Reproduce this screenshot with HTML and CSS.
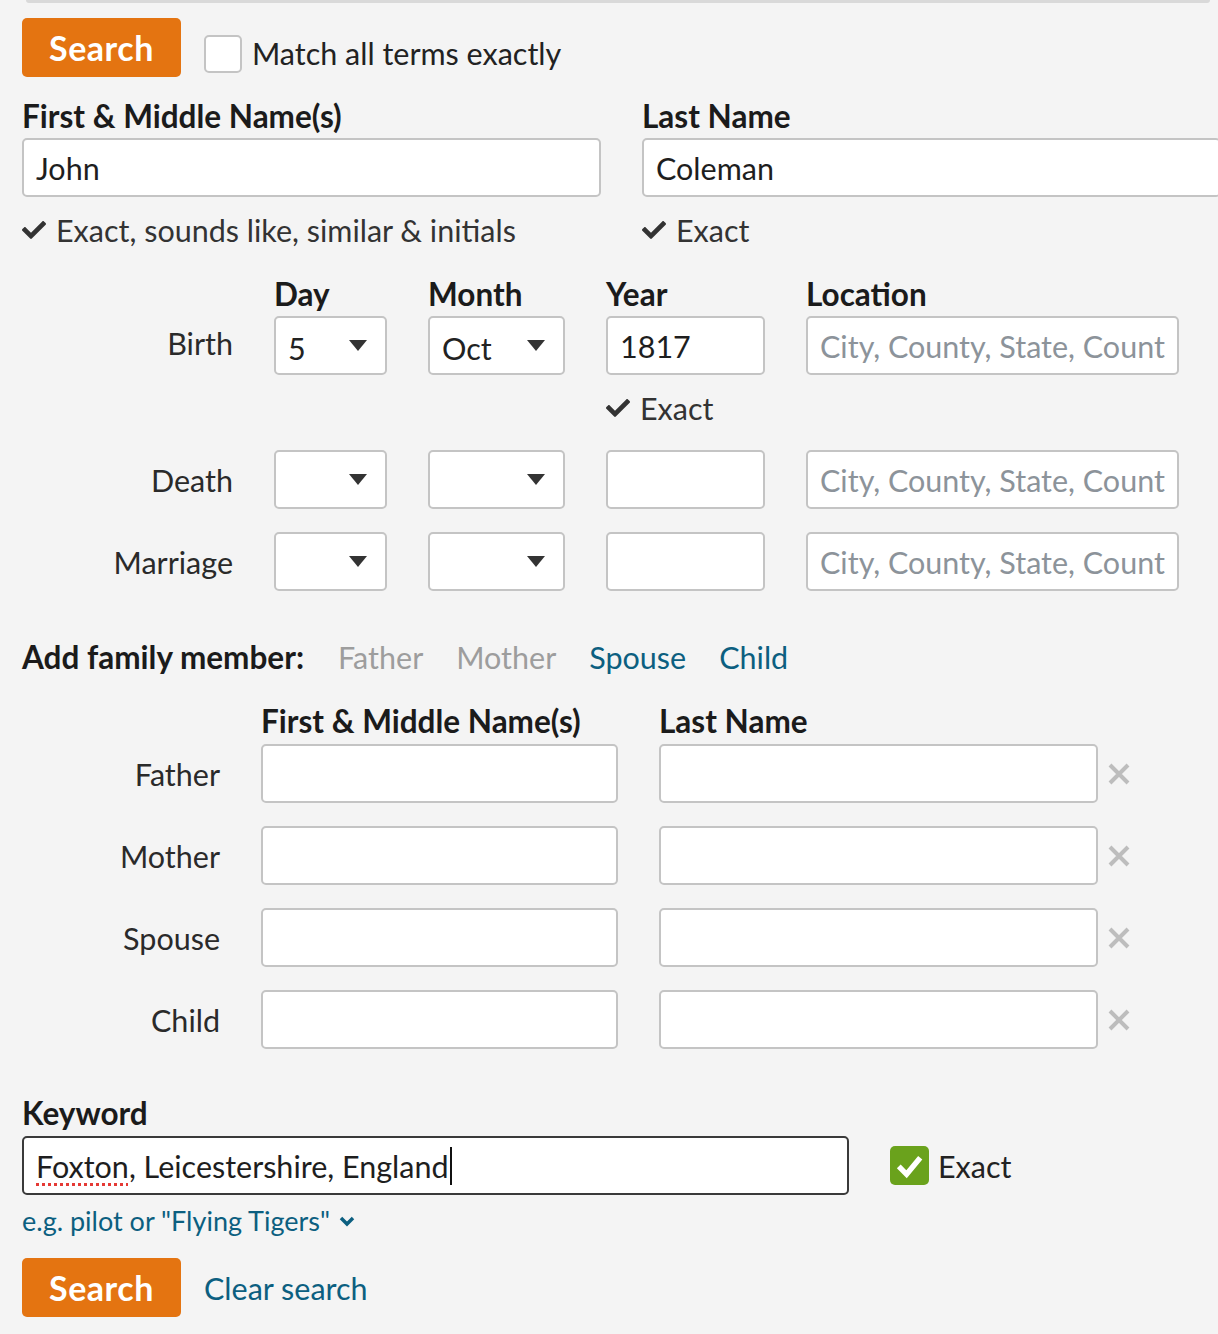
FILE: index.html
```html
<!DOCTYPE html>
<html lang="en">
<head>
<meta charset="utf-8">
<title>Search</title>
<link rel="stylesheet" href="styles.css">
</head>
<body>
<div class="top-edge"></div>
<main class="form">
  <div class="search-row">
    <button class="btn-search">Search</button>
    <span class="checkbox"></span>
    <span class="check-label">Match all terms exactly</span>
  </div>

  <div class="name-grid">
    <div class="field">
      <div class="label">First &amp; Middle Name(s)</div>
      <div class="input"><span class="val">John</span></div>
      <div class="exact"><svg class="tick" viewBox="0 0 512 512"><path d="M173.9 439.4l-166.4-166.4c-10-10-10-26.2 0-36.2l36.2-36.2c10-10 26.2-10 36.2 0L192 312.7 432.1 72.6c10-10 26.2-10 36.2 0l36.2 36.2c10 10 10 26.2 0 36.2l-294.4 294.4c-10 10-26.2 10-36.2 0z"/></svg>Exact, sounds like, similar &amp; initials</div>
    </div>
    <div class="field">
      <div class="label">Last Name</div>
      <div class="input"><span class="val">Coleman</span></div>
      <div class="exact"><svg class="tick" viewBox="0 0 512 512"><path d="M173.9 439.4l-166.4-166.4c-10-10-10-26.2 0-36.2l36.2-36.2c10-10 26.2-10 36.2 0L192 312.7 432.1 72.6c10-10 26.2-10 36.2 0l36.2 36.2c10 10 10 26.2 0 36.2l-294.4 294.4c-10 10-26.2 10-36.2 0z"/></svg>Exact</div>
    </div>
  </div>

  <div class="events">
    <div class="ev-row ev-head">
      <span></span><span class="label">Day</span><span class="label">Month</span><span class="label">Year</span><span class="label">Location</span>
    </div>
    <div class="ev-row ev-first">
      <span class="ev-label">Birth</span>
      <div class="select"><span>5</span><i class="caret"></i></div>
      <div class="select"><span>Oct</span><i class="caret"></i></div>
      <div class="input"><span class="val">1817</span></div>
      <div class="input placeholder"><span class="val">City, County, State, Country</span></div>
    </div>
    <div class="ev-row ev-exact">
      <span></span><span></span><span></span>
      <div class="exact"><svg class="tick" viewBox="0 0 512 512"><path d="M173.9 439.4l-166.4-166.4c-10-10-10-26.2 0-36.2l36.2-36.2c10-10 26.2-10 36.2 0L192 312.7 432.1 72.6c10-10 26.2-10 36.2 0l36.2 36.2c10 10 10 26.2 0 36.2l-294.4 294.4c-10 10-26.2 10-36.2 0z"/></svg>Exact</div>
    </div>
    <div class="ev-row ev-death">
      <span class="ev-label">Death</span>
      <div class="select"><span></span><i class="caret"></i></div>
      <div class="select"><span></span><i class="caret"></i></div>
      <div class="input"></div>
      <div class="input placeholder"><span class="val">City, County, State, Country</span></div>
    </div>
    <div class="ev-row ev-marriage">
      <span class="ev-label">Marriage</span>
      <div class="select"><span></span><i class="caret"></i></div>
      <div class="select"><span></span><i class="caret"></i></div>
      <div class="input"></div>
      <div class="input placeholder"><span class="val">City, County, State, Country</span></div>
    </div>
  </div>

  <div class="add-family">
    <span class="label">Add family member:</span>
    <a class="fam-link disabled">Father</a>
    <a class="fam-link disabled">Mother</a>
    <a class="fam-link">Spouse</a>
    <a class="fam-link">Child</a>
  </div>

  <div class="family">
    <div class="fam-row fam-head">
      <span></span><span class="label">First &amp; Middle Name(s)</span><span class="label">Last Name</span><span></span>
    </div>
    <div class="fam-row">
      <span class="ev-label">Father</span><div class="input"></div><div class="input"></div>
      <svg class="remove" viewBox="0 0 22 22"><path d="M2 2L20 20M20 2L2 20"/></svg>
    </div>
    <div class="fam-row">
      <span class="ev-label">Mother</span><div class="input"></div><div class="input"></div>
      <svg class="remove" viewBox="0 0 22 22"><path d="M2 2L20 20M20 2L2 20"/></svg>
    </div>
    <div class="fam-row">
      <span class="ev-label">Spouse</span><div class="input"></div><div class="input"></div>
      <svg class="remove" viewBox="0 0 22 22"><path d="M2 2L20 20M20 2L2 20"/></svg>
    </div>
    <div class="fam-row">
      <span class="ev-label">Child</span><div class="input"></div><div class="input"></div>
      <svg class="remove" viewBox="0 0 22 22"><path d="M2 2L20 20M20 2L2 20"/></svg>
    </div>
  </div>

  <div class="keyword">
    <div class="label">Keyword</div>
    <div class="kw-row">
      <div class="input kw-input"><span class="misspelled">Foxton</span>, Leicestershire, England<i class="text-caret"></i></div>
      <span class="green-box"><svg viewBox="0 0 40 40"><path d="M9 21l8 8L31 12"/></svg></span>
      <span class="check-label">Exact</span>
    </div>
    <a class="hint">e.g. pilot or "Flying Tigers" <svg class="chev" viewBox="0 0 16 12"><path d="M2 3l6 6 6-6"/></svg></a>
  </div>

  <div class="actions">
    <button class="btn-search">Search</button>
    <a class="clear">Clear search</a>
  </div>
</main>
</body>
</html>
```

FILE: styles.css
```css
* { box-sizing: border-box; }
html, body {
  margin: 0;
  padding: 0;
  background: #f4f4f4;
  overflow: hidden;
}
body {
  font-family: "Lato", "Liberation Sans", sans-serif;
  font-size: 30.5px;
  color: #222;
  width: 1218px;
  height: 1334px;
}
.top-edge {
  margin: 0 8px 0 26px;
  height: 3px;
  background: #d9d9d9;
  border-radius: 0 0 8px 8px;
}
.form {
  padding-left: 22px;
}
.label {
  font-weight: 700;
  font-size: 31.5px;
  color: #1b1b1b;
  line-height: 34px;
  white-space: nowrap;
}
.search-row {
  display: flex;
  align-items: flex-start;
  margin-top: 15px;
  height: 59px;
}
.btn-search {
  width: 159px;
  height: 59px;
  border: 0;
  border-radius: 5px;
  background: #e47411;
  color: #fff;
  font-family: inherit;
  font-weight: 700;
  font-size: 34px;
  letter-spacing: 0.5px;
  padding: 0;
}
.search-row .checkbox {
  margin-top: 17px;
}
.search-row .check-label {
  margin-top: 16px;
  line-height: 38px;
}
.checkbox {
  width: 38px;
  height: 38px;
  margin-left: 23px;
  border: 2px solid #c4c4c4;
  border-radius: 5px;
  background: #fff;
}
.check-label {
  margin-left: 10px;
  color: #222;
  white-space: nowrap;
}
.input {
  height: 59px;
  border: 2px solid #c4c4c4;
  border-radius: 5px;
  background: #fff;
  padding: 0 12px;
  display: flex;
  align-items: center;
  white-space: nowrap;
  overflow: hidden;
  color: #1e1e1e;
}
.input .val {
  display: block;
  overflow: hidden;
  min-width: 0;
  white-space: nowrap;
}
.placeholder { color: #8c939a; }
.name-grid {
  display: grid;
  grid-template-columns: 579px 579px;
  column-gap: 41px;
  margin-top: 22px;
}
.name-grid .input { margin-top: 5px; }
.exact {
  display: flex;
  align-items: center;
  line-height: 34px;
  color: #333;
  white-space: nowrap;
}
.name-grid .exact { margin-top: 16px; }
.tick {
  width: 24px;
  height: 24px;
  fill: #333;
  margin-right: 10px;
  flex: none;
}
.events { margin-top: 30px; }
.ev-row {
  display: grid;
  grid-template-columns: 211px 113px 137px 159px 373px;
  column-gap: 41px;
  align-items: center;
}
.ev-first { margin-top: 5px; }
.ev-exact { margin-top: 16px; }
.ev-death { margin-top: 25px; }
.ev-marriage { margin-top: 23px; }
.ev-label {
  text-align: right;
  color: #2a2a2a;
  white-space: nowrap;
}
.ev-first .ev-label { padding-bottom: 6px; }
.select {
  height: 59px;
  border: 2px solid #c4c4c4;
  border-radius: 5px;
  background: #fff;
  display: flex;
  align-items: center;
  justify-content: space-between;
  padding: 0 18px 0 12px;
}
.select span { padding-top: 4px; }
.caret {
  width: 0;
  height: 0;
  border-left: 9px solid transparent;
  border-right: 9px solid transparent;
  border-top: 11px solid #333;
}
.add-family {
  display: flex;
  align-items: center;
  margin-top: 49px;
  line-height: 34px;
}
.add-family .label { margin-right: 34px; }
.fam-link {
  color: #0c5f80;
  margin-right: 33px;
}
.fam-link.disabled { color: #9d9d9d; }
.family { margin-top: 30px; }
.fam-row {
  display: grid;
  grid-template-columns: 198px 357px 439px 22px;
  column-gap: 41px;
  align-items: center;
  margin-top: 23px;
}
.fam-row.fam-head { margin-top: 0; }
.fam-row:nth-child(2) { margin-top: 6px; }
.fam-row .remove { margin-left: -31px; }
.remove {
  width: 22px;
  height: 22px;
  stroke: #bdbdbd;
  stroke-width: 4;
  fill: none;
}
.keyword { margin-top: 47px; }
.kw-row {
  display: flex;
  align-items: center;
  margin-top: 6px;
}
.kw-input {
  width: 827px;
  border-color: #3a3a3a;
}
.misspelled {
  text-decoration: underline dotted #e53935;
  text-decoration-thickness: 3px;
  text-underline-offset: 5px;
}
.text-caret {
  display: inline-block;
  width: 2px;
  height: 38px;
  background: #111;
  margin-left: 1px;
}
.green-box {
  width: 39px;
  height: 39px;
  margin-left: 41px;
  border-radius: 5px;
  background: #6aa21c;
  display: flex;
}
.green-box svg {
  width: 39px;
  height: 39px;
  stroke: #fff;
  stroke-width: 5.5;
  fill: none;
}
.kw-row .check-label { margin-left: 9px; }
.hint {
  display: flex;
  align-items: center;
  margin-top: 11px;
  font-size: 27px;
  line-height: 30px;
  color: #0c5f80;
  white-space: pre;
}
.chev {
  width: 16px;
  height: 12px;
  stroke: #0c5f80;
  stroke-width: 3.5;
  fill: none;
  margin-left: 2px;
}
.actions {
  display: flex;
  align-items: center;
  margin-top: 22px;
}
.clear {
  margin-left: 23px;
  color: #0c5f80;
}
```
